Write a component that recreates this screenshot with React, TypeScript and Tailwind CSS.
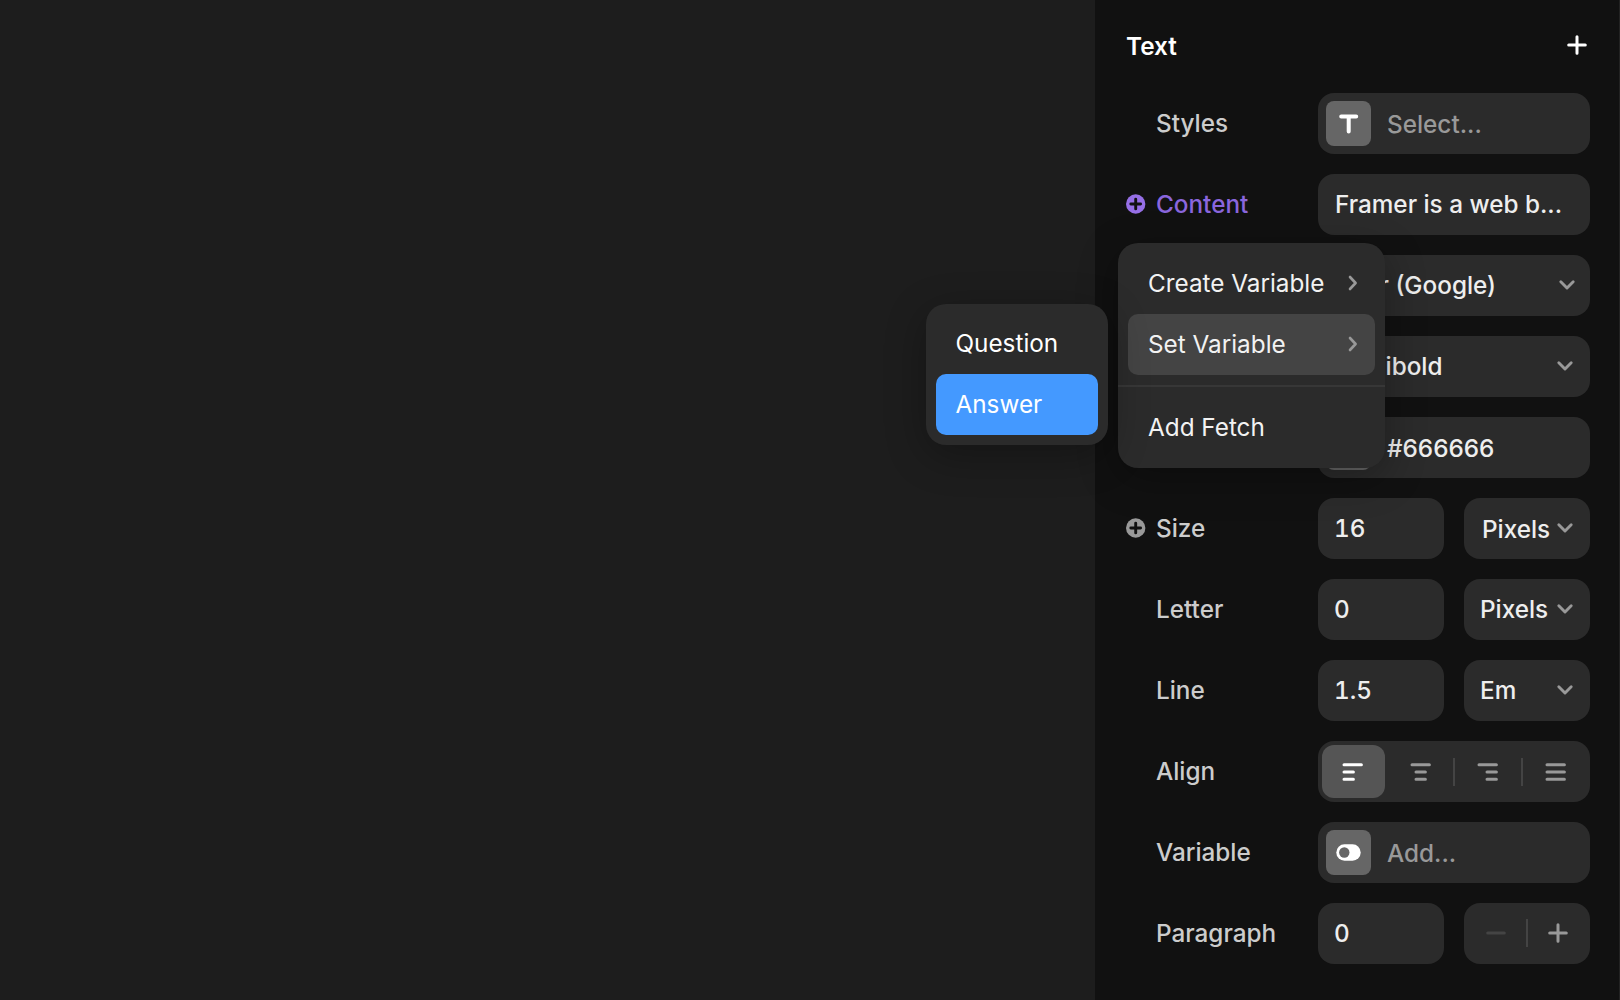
import React from "react";

const ChevronDown = ({ className = "" }: { className?: string }) => (
  <svg width="18" height="12" viewBox="0 0 18 12" fill="none" className={`shrink-0 ${className}`}>
    <path d="M2.8 2.8 9 9l6.2-6.2" stroke="#999999" strokeWidth="2.9" strokeLinecap="round" strokeLinejoin="round" />
  </svg>
);

const ChevronRight = () => (
  <svg width="12" height="18" viewBox="0 0 12 18" fill="none" className="shrink-0">
    <path d="M3 3l5.6 6L3 15" stroke="#999999" strokeWidth="2.6" strokeLinecap="round" strokeLinejoin="round" />
  </svg>
);

const Plus = ({ color }: { color: string }) => (
  <svg width="20" height="20" viewBox="0 0 20 20" fill="none" className="shrink-0">
    <path d="M10 1.7v16.6M1.7 10h16.6" stroke={color} strokeWidth="3" strokeLinecap="round" />
  </svg>
);

const CirclePlus = ({ color }: { color: string }) => (
  <svg width="20" height="20" viewBox="0 0 20 20" fill="none" className="shrink-0">
    <circle cx="9.7" cy="10" r="9.7" fill={color} />
    <path d="M9.7 5.1v9.8M4.8 10h9.8" stroke="#111111" strokeWidth="2.9" strokeLinecap="round" />
  </svg>
);

// x1/x2 of the long line, then of the two short ones
const aligns = [
  { name: "left", long: [2, 19.4], short: [2, 11.4] },
  { name: "center", long: [2, 19.4], short: [6, 15.4] },
  { name: "right", long: [2, 19.4], short: [10, 19.4] },
  { name: "justify", long: [2, 19.4], short: [2, 19.4] },
];

const AlignIcon = ({ long, short, color }: { long: number[]; short: number[]; color: string }) => (
  <svg width="22" height="20" viewBox="0 0 22 20" fill="none">
    <path
      d={`M${long[0]} 2.8H${long[1]}M${short[0]} 10H${short[1]}M${short[0]} 17.2H${short[1]}`}
      stroke={color}
      strokeWidth="3"
      strokeLinecap="round"
    />
  </svg>
);

const Field = ({ className = "", children }: { className?: string; children?: React.ReactNode }) => (
  <div className={`flex h-[61px] items-center rounded-[16px] bg-[#2b2b2b] ${className}`}>{children}</div>
);

const Row = ({ label, icon, labelClass = "text-[#cccccc]", children }: {
  label?: string;
  icon?: React.ReactNode;
  labelClass?: string;
  children: React.ReactNode;
}) => (
  <div className="flex h-[61px] items-center">
    <div className="flex w-[192px] shrink-0 items-center pb-[2px]">
      <div className="w-[30px] shrink-0">{icon}</div>
      <div className={labelClass}>{label}</div>
    </div>
    <div className="flex w-[272px] shrink-0 gap-5">{children}</div>
  </div>
);

const Thumb = ({ children }: { children?: React.ReactNode }) => (
  <div className="ml-2 mr-4 flex size-[45px] shrink-0 items-center justify-center rounded-[8px] bg-[#666666]">
    {children}
  </div>
);

const UnitRow = ({ label, icon, value, unit, unitClass = "" }: {
  label: string;
  icon?: React.ReactNode;
  value: string;
  unit: string;
  unitClass?: string;
}) => (
  <Row label={label} icon={icon}>
    <Field className="w-[126px] px-4 pb-[2px] text-[#eeeeee] tabular-nums">{value}</Field>
    <Field className="w-[126px] justify-between pl-4 pr-4 pb-[2px] text-[#eeeeee]">
      <span className={unitClass}>{unit}</span>
      <ChevronDown />
    </Field>
  </Row>
);

const MenuItem = ({ label, arrow, className = "" }: { label: string; arrow?: boolean; className?: string }) => (
  <div className={`flex h-[61px] items-center justify-between rounded-[10px] pl-5 pr-4 pb-[2px] ${className}`}>
    <span>{label}</span>
    {arrow && <ChevronRight />}
  </div>
);

const App = () => {
  return (
    <div className="relative flex h-[1000px] w-[1620px] overflow-hidden bg-[#1d1d1d] font-['Inter',sans-serif] text-[24.3px] leading-[30px] font-medium whitespace-nowrap">
      <div className="flex-1" />

      <div className="w-[525px] shrink-0 border-r border-[#222222] bg-[#111111] pl-[31px] pr-[29px]">
        <div className="flex h-[93px] items-center justify-between pr-[3px] pb-[3px] font-semibold text-white">
          <span className="pt-[2px]">Text</span>
          <Plus color="#ffffff" />
        </div>

        <div className="flex flex-col gap-5">
          <Row label="Styles">
            <Field className="w-full text-[#999999]">
              <Thumb>
                <svg width="20" height="20" viewBox="0 0 20 20" fill="none">
                  <path d="M2.2 2.6h15M9.7 2.6v14.8" stroke="#ffffff" strokeWidth="4" strokeLinecap="round" />
                </svg>
              </Thumb>
              Select...
            </Field>
          </Row>
          <Row label="Content" labelClass="text-[#8a66dd]" icon={<CirclePlus color="#966fe6" />}>
            <Field className="w-full pl-[17px] pb-[2px] text-[#eeeeee]">Framer is a web b...</Field>
          </Row>
          {/* labels of the next three rows are under the menu */}
          <Row>
            <Field className="w-full justify-between pl-[18px] pr-[14px] pb-[2px] text-[#eeeeee]">
              Inter (Google)
              <ChevronDown />
            </Field>
          </Row>
          <Row>
            <Field className="w-full justify-between px-4 pb-[2px] text-[#eeeeee]">
              Semibold
              <ChevronDown />
            </Field>
          </Row>
          <Row>
            <Field className="w-full text-[#eeeeee]">
              <Thumb />
              #666666
            </Field>
          </Row>
          <UnitRow
            label="Size"
            icon={<CirclePlus color="#999999" />}
            value="16"
            unit="Pixels"
            unitClass="ml-[2px] mt-[2px]"
          />
          <UnitRow label="Letter" value="0" unit="Pixels" />
          <UnitRow label="Line" value="1.5" unit="Em" />
          <Row label="Align">
            <Field className="w-full pl-[1px]">
              {aligns.map((a, i) => (
                <div key={a.name} className="flex h-full flex-1 items-center justify-center">
                  <div
                    className={`flex h-[53px] w-[63px] items-center justify-center rounded-[12px] ${
                      i === 0 ? "ml-[2px] bg-[#555555] pr-[2px]" : ""
                    }`}
                  >
                    <AlignIcon long={a.long} short={a.short} color={i === 0 ? "#ffffff" : "#999999"} />
                  </div>
                  {(i === 1 || i === 2) && <div className="-mr-[3px] ml-px h-7 w-[2px] bg-[#444444]" />}
                </div>
              ))}
            </Field>
          </Row>
          <Row label="Variable">
            <Field className="w-full text-[#999999]">
              <Thumb>
                <svg width="25" height="17" viewBox="0 0 25 17">
                  <rect x="0.3" y="0.3" width="24.4" height="16.4" rx="8.2" fill="#ffffff" />
                  <circle cx="8.3" cy="8.5" r="5.2" fill="#666666" />
                </svg>
              </Thumb>
              Add...
            </Field>
          </Row>
          <Row label="Paragraph">
            <Field className="w-[126px] px-4 pb-[2px] text-[#eeeeee] tabular-nums">0</Field>
            <Field className="w-[126px] pb-[2px]">
              <div className="flex flex-1 justify-center pl-[2px]">
                <svg width="20" height="4" viewBox="0 0 20 4" fill="none">
                  <path d="M1.7 2h16.6" stroke="#444444" strokeWidth="3" strokeLinecap="round" />
                </svg>
              </div>
              <div className="h-7 w-[2px] bg-[#444444]" />
              <div className="flex flex-1 justify-center pr-[2px]">
                <Plus color="#999999" />
              </div>
            </Field>
          </Row>
        </div>
      </div>

      {/* variable menu, opened from the Content row */}
      <div className="absolute left-[1118px] top-[243px] w-[267px] rounded-[20px] bg-[#2b2b2b] py-[10px] font-normal text-[#f2f2f2] shadow-[0_10px_40px_rgba(0,0,0,0.3)]">
        <div className="px-[10px]">
          <MenuItem label="Create Variable" arrow />
          <MenuItem label="Set Variable" arrow className="bg-[#444444]" />
        </div>
        <div className="my-[10px] h-[2px] bg-[#373737]" />
        <div className="px-[10px]">
          <MenuItem label="Add Fetch" />
        </div>
      </div>

      {/* submenu of Set Variable */}
      <div className="absolute left-[925.5px] top-[304px] w-[182px] rounded-[20px] bg-[#2b2b2b] px-[10px] pt-[9px] pb-[10px] font-normal text-white shadow-[0_10px_40px_rgba(0,0,0,0.3)]">
        <MenuItem label="Question" />
        <MenuItem label="Answer" className="bg-[#4499ff]" />
      </div>
    </div>
  );
};

export default App;
